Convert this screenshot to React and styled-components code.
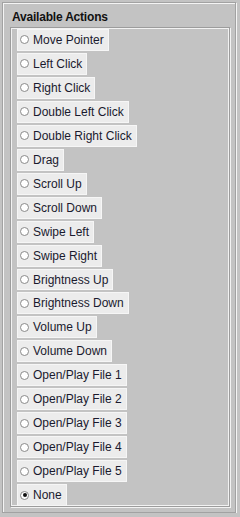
import React, { useState } from 'react'
import styled, { createGlobalStyle } from 'styled-components'

const actions = [
  'Move Pointer',
  'Left Click',
  'Right Click',
  'Double Left Click',
  'Double Right Click',
  'Drag',
  'Scroll Up',
  'Scroll Down',
  'Swipe Left',
  'Swipe Right',
  'Brightness Up',
  'Brightness Down',
  'Volume Up',
  'Volume Down',
  'Open/Play File 1',
  'Open/Play File 2',
  'Open/Play File 3',
  'Open/Play File 4',
  'Open/Play File 5',
  'None',
]

export default function App() {
  const [selected, setSelected] = useState('None')

  return (
    <>
      <GlobalStyle />
      <Frame>
        <Title>Available Actions</Title>
        <ActionPanel>
          {actions.map((name) => (
            <ActionItem key={name} onClick={() => setSelected(name)}>
              <Radio checked={selected === name} />
              <ActionLabel>{name}</ActionLabel>
            </ActionItem>
          ))}
        </ActionPanel>
      </Frame>
    </>
  )
}

const GlobalStyle = createGlobalStyle`
  html, body {
    margin: 0;
    padding: 0;
    background: #c3c3c3;
    font-family: "Liberation Sans", Arial, sans-serif;
  }
`

const Frame = styled.div`
  box-sizing: border-box;
  width: 234px;
  height: 511px;
  margin: 2px 0 0 2px;
  border: 1px solid #a2a2a2;
  box-shadow: inset 1px 1px 0 #f4f4f4, 1px 1px 0 #f4f4f4;
  display: flex;
  flex-direction: column;
`

const Title = styled.div`
  padding: 7px 0 0 9px;
  height: 16px;
  font-size: 12px;
  color: #111;
  font-weight: 600;
  letter-spacing: -0.2px;
`

const ActionPanel = styled.div`
  box-sizing: border-box;
  margin: 1px 5px 0 7px;
  height: 480px;
  border: 1px solid #9c9c9c;
  box-shadow: inset 1px 1px 0 #f2f2f2, inset -1px -1px 0 #f2f2f2,
    1px 1px 0 #f2f2f2;
  padding: 1px 5px 0 6px;
  display: flex;
  flex-direction: column;
  align-items: flex-start;
  gap: 2px;
`

const ActionItem = styled.label`
  box-sizing: border-box;
  height: 22px;
  display: flex;
  align-items: center;
  gap: 4px;
  padding: 0 4px 0 2px;
  background: #ececec;
  border: 1px solid #f6f6f6;
  cursor: default;
`

const Radio = styled.span`
  box-sizing: border-box;
  width: 9px;
  height: 9px;
  border-radius: 50%;
  border: 1px solid #8a8a8a;
  background: #fff;
  position: relative;

  &::after {
    content: '';
    display: ${(p) => (p.checked ? 'block' : 'none')};
    position: absolute;
    left: 1.5px;
    top: 1.5px;
    width: 4px;
    height: 4px;
    border-radius: 50%;
    background: #111;
  }
`

const ActionLabel = styled.span`
  font-size: 12px;
  color: #1a1a2e;
  white-space: nowrap;
`
